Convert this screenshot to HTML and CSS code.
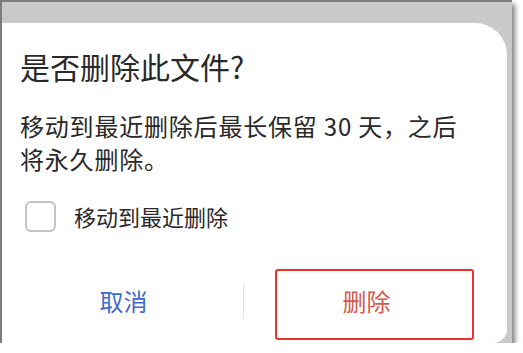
FILE: index.html
```html
<!DOCTYPE html>
<html lang="zh-CN">
<head>
    <meta charset="UTF-8">
    <meta name="viewport" content="width=device-width, initial-scale=1.0">
    <title>删除文件</title>
    <link rel="stylesheet" href="styles.css">
</head>

<body>
    <div class="frame">
        <div class="dialog">
            <h2 class="title">是否删除此文件?</h2>
            <p class="message">移动到最近删除后最长保留 30 天，之后将永久删除。</p>
            <label class="option">
                <span class="box"></span>
                <span class="label">移动到最近删除</span>
            </label>
            <div class="actions">
                <button type="button" class="btn cancel">取消</button>
                <span class="divider"></span>
                <button type="button" class="btn delete">删除</button>
            </div>
            <div class="highlight"></div>
        </div>
    </div>
</body>
</html>
```

FILE: styles.css
```css
body {
    margin: 0;
    background-color: #fff;
    font-family: "Noto Sans CJK SC", "Noto Sans", sans-serif;
}
.frame {
    width: 510px;
    height: 320px;
    padding-top: 21px;
    background-color: #c9c9c9;
    border-top: 2px solid #7d7d7d;
    border-left: 2px solid #7d7d7d;
    box-shadow: 3px 4px 5px rgba(0, 0, 0, 0.5);
}
.dialog {
    position: relative;
    height: 100%;
    margin-right: 5px;
    padding-left: 18px;
    background-color: #fff;
    border-top-right-radius: 32px;
    border-bottom-right-radius: 14px;
    color: #292929;
}
.title {
    margin: 0;
    padding-top: 25px;
    font-size: 30px;
    font-weight: normal;
    line-height: 36px;
}
.message {
    width: 455px;
    margin: 25px 0 0;
    font-size: 24px;
    letter-spacing: 0.8px;
    line-height: 33px;
}
.option {
    display: flex;
    align-items: center;
    margin-top: 25px;
    padding-left: 5px;
}
.box {
    width: 27px;
    height: 27px;
    border: 2px solid #c2c2c2;
    border-radius: 6px;
}
.label {
    margin-left: 18px;
    font-size: 22px;
}
.actions {
    display: flex;
    align-items: center;
    height: 40px;
    margin-top: 49px;
    margin-left: -18px;
}
.btn {
    padding: 0;
    border: none;
    background: none;
    font-family: inherit;
    font-size: 24px;
    line-height: 40px;
    cursor: pointer;
}
.cancel {
    width: 241px;
    padding-left: 2px;
    color: #3e6cc8;
}
.divider {
    width: 1px;
    height: 36px;
    background-color: #e6e6e6;
}
.delete {
    flex: 1;
    padding-right: 18px;
    color: #d35a4c;
}
.highlight {
    position: absolute;
    left: 273px;
    top: 246px;
    width: 195px;
    height: 67px;
    border: 2px solid #e8342f;
    border-radius: 3px;
}
```
